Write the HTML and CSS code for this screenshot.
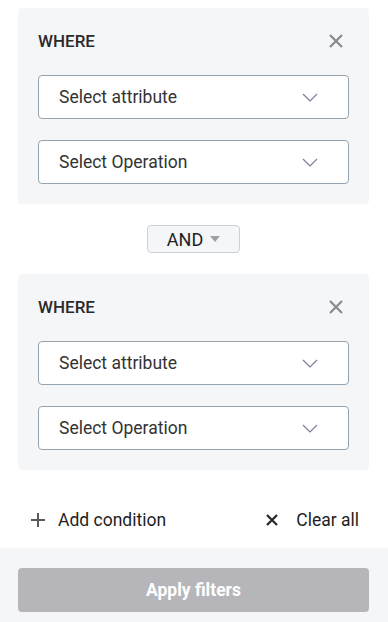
FILE: index.html
```html
<!DOCTYPE html>
<html lang="en">
<head>
    <meta charset="UTF-8">
    <meta name="viewport" content="width=device-width, initial-scale=1.0">
    <title>Filters</title>
    <link rel="stylesheet" href="styles.css">
</head>
<body>
    <div class="filters">
        <div class="condition">
            <div class="condition-head">
                <span class="where">WHERE</span>
                <button class="close" aria-label="Remove">
                    <svg width="14" height="14" viewBox="0 0 14 14"><path d="M1 1L13 13M13 1L1 13" stroke="#8a8a8a" stroke-width="2.2"/></svg>
                </button>
            </div>
            <div class="select">
                <span>Select attribute</span>
                <svg width="16" height="9" viewBox="0 0 16 9"><path d="M1 1L8 8L15 1" fill="none" stroke="#7c7c9c" stroke-width="1.2"/></svg>
            </div>
            <div class="select">
                <span>Select Operation</span>
                <svg width="16" height="9" viewBox="0 0 16 9"><path d="M1 1L8 8L15 1" fill="none" stroke="#7c7c9c" stroke-width="1.2"/></svg>
            </div>
        </div>

        <div class="joiner">
            <button class="and">AND <span class="caret"></span></button>
        </div>

        <div class="condition">
            <div class="condition-head">
                <span class="where">WHERE</span>
                <button class="close" aria-label="Remove">
                    <svg width="14" height="14" viewBox="0 0 14 14"><path d="M1 1L13 13M13 1L1 13" stroke="#8a8a8a" stroke-width="2.2"/></svg>
                </button>
            </div>
            <div class="select">
                <span>Select attribute</span>
                <svg width="16" height="9" viewBox="0 0 16 9"><path d="M1 1L8 8L15 1" fill="none" stroke="#7c7c9c" stroke-width="1.2"/></svg>
            </div>
            <div class="select">
                <span>Select Operation</span>
                <svg width="16" height="9" viewBox="0 0 16 9"><path d="M1 1L8 8L15 1" fill="none" stroke="#7c7c9c" stroke-width="1.2"/></svg>
            </div>
        </div>

        <div class="actions">
            <button class="link">
                <svg width="14" height="14" viewBox="0 0 14 14"><path d="M7 0V14M0 7H14" stroke="#5a5a5a" stroke-width="2"/></svg>
                Add condition
            </button>
            <button class="link">
                <svg width="12" height="12" viewBox="0 0 12 12"><path d="M1 1L11 11M11 1L1 11" stroke="#2a2a2a" stroke-width="2.3"/></svg>
                Clear all
            </button>
        </div>
    </div>
    <div class="footer">
        <button class="apply">Apply filters</button>
    </div>
</body>
</html>
```

FILE: styles.css
```css
body {
    margin: 0;
    font-family: Roboto, "Liberation Sans", sans-serif;
    color: #333;
    background: #fff;
}
button {
    font-family: inherit;
    background: none;
    border: none;
    padding: 0;
    cursor: pointer;
}
.filters {
    padding: 8px 19px 0 18px;
}
.condition {
    background-color: #f5f6f8;
    border-radius: 4px;
    padding: 21px 20px 20px 20px;
}
.condition-head {
    display: flex;
    justify-content: space-between;
    align-items: center;
    height: 24px;
    margin-bottom: 22px;
}
.where {
    font-size: 17px;
    font-weight: 500;
    color: #2a2a2a;
}
.close {
    display: flex;
    margin-right: 6px;
}
.select {
    display: flex;
    justify-content: space-between;
    align-items: center;
    height: 42px;
    background: #fff;
    border: 1px solid #92a4b1;
    border-radius: 4px;
    padding: 0 30px 0 20px;
    font-size: 17.5px;
    color: #333;
}
.select + .select {
    margin-top: 21px;
}
.joiner {
    display: flex;
    justify-content: center;
    padding: 21px 0 21px 0;
}
.and {
    display: flex;
    align-items: center;
    gap: 7px;
    height: 28px;
    padding: 0 19px 0 19px;
    background-color: #f5f6f8;
    border: 1px solid #ccd0d6;
    border-radius: 4px;
    font-size: 18px;
    color: #222;
}
.caret {
    width: 0;
    height: 0;
    border-left: 5px solid transparent;
    border-right: 5px solid transparent;
    border-top: 6px solid #a0a0a0;
}
.actions {
    display: flex;
    justify-content: space-between;
    align-items: center;
    height: 18px;
    padding: 41px 10px 19px 13px;
}
.link {
    display: flex;
    align-items: center;
    gap: 13px;
    font-size: 17.5px;
    line-height: 18px;
    color: #1e1e1e;
}
.link + .link {
    gap: 18px;
}
.footer {
    background-color: #f5f6f8;
    padding: 20px 19px 10px 18px;
}
.apply {
    width: 100%;
    height: 44px;
    background-color: #b6b5ba;
    border-radius: 4px;
    color: #fff;
    font-size: 17.5px;
    font-weight: 700;
}
```
